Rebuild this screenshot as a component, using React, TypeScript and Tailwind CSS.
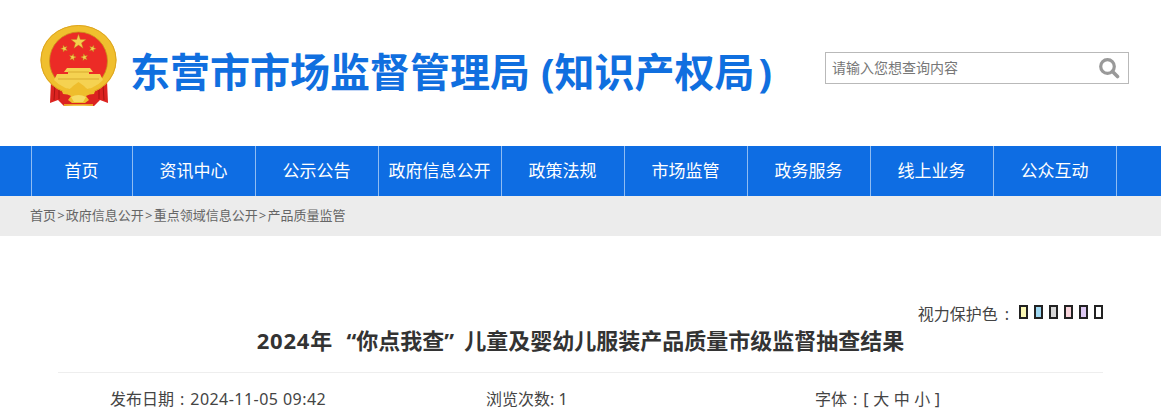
const cjk = "font-['Noto_Sans','Noto_Sans_CJK_SC',sans-serif]";

const navItems = ["资讯中心", "公示公告", "政府信息公开", "政策法规", "市场监管", "政务服务", "线上业务", "公众互动"];

const swatches = ["bg-[#fbf8b4]", "bg-[#9fd8f2]", "bg-[#d6d6d6]", "bg-[#f9d5dc]", "bg-[#dcc8f2]", "bg-white"];

const crumbs = ["首页", "政府信息公开", "重点领域信息公开", "产品质量监管"];

function Star({ x, y, r, rot = 0 }: { x: number; y: number; r: number; rot?: number }) {
  const pts: string[] = [];
  for (let i = 0; i < 10; i++) {
    const rad = i % 2 === 0 ? r : r * 0.4;
    const a = (-90 + rot + i * 36) * (Math.PI / 180);
    pts.push(`${(x + rad * Math.cos(a)).toFixed(2)},${(y + rad * Math.sin(a)).toFixed(2)}`);
  }
  return <polygon points={pts.join(" ")} fill="#f4cf4e" stroke="#b98a1a" strokeWidth="0.4" />;
}

function Emblem() {
  return (
    <svg width="78" height="82" viewBox="0 0 78 82" className="shrink-0">
      {/* ribbons */}
      <path d="M11 56 L10 78 L18 75 L24 81 L34 80 L44 80 L54 81 L60 75 L68 78 L67 56 Z" fill="#dc2320" />
      <path d="M15 60 L14 75 M19 62 L19 74 M63 60 L64 75 M59 62 L59 74" stroke="#a91512" strokeWidth="1" />
      {/* ring */}
      <ellipse cx="38.5" cy="35" rx="38" ry="35" fill="#f0bf2e" />
      <ellipse cx="38.5" cy="35" rx="37.5" ry="34.5" fill="none" stroke="#dda521" strokeWidth="1" />
      <circle cx="38.5" cy="36" r="29" fill="#ec2b26" stroke="#c9931b" strokeWidth="0.8" />
      <Star x={38.5} y={17} r={7.8} />
      <Star x={24.3} y={23.6} r={3.6} rot={-20} />
      <Star x={52.5} y={23.6} r={3.6} rot={20} />
      <Star x={32.6} y={32.3} r={3.6} rot={12} />
      <Star x={44.4} y={32.3} r={3.6} rot={-12} />
      {/* gate */}
      <path d="M27 43 H50 L53 47 H49 V49 H60 L63 55 Q54 65 38.5 65 Q23 65 14 55 L17 49 H28 V47 H24 Z" fill="#f5d251" />
      <path d="M28 47 H49 M18 54 H59" stroke="#cf9e22" strokeWidth="0.7" />
      {/* knot */}
      <path d="M22 66 Q29 66 33 61 L38.5 57 L44 61 Q48 66 55 66 L54 69 Q49 69 46 71 L49 75 L45 78 H32 L28 75 L31 71 Q28 69 23 69 Z" fill="#efbd2c" />
      <path d="M31 72 Q38.5 68 46 72 L43 77 H34 Z" fill="#f7dc66" />
      <path d="M24 80 H53" stroke="#efbd2c" strokeWidth="1.6" />
    </svg>
  );
}

export default function App() {
  return (
    <div className={`w-[1161px] h-[420px] overflow-hidden bg-white ${cjk}`}>
      <header className="h-[146px] flex items-start pl-10 pr-8 pt-[25px]">
        <Emblem />
        <h1 className="ml-[12px] mt-[27px] text-[40px] leading-[40px] font-bold text-[#106fdf] whitespace-nowrap">
          东营市市场监督管理局<span className="ml-[11px]">(</span>知识产权局<span className="ml-[4px]">)</span>
        </h1>
        <div className="ml-auto mt-[27px] w-[304px] h-8 border border-[#b9b9b9] flex items-center pl-[6px] pr-[8px]">
          <span className="text-[14px] mt-[-2px] text-[#777]">请输入您想查询内容</span>
          <svg width="22" height="22" viewBox="0 0 22 22" fill="none" className="ml-auto">
            <circle cx="9.5" cy="9.5" r="6.8" stroke="#999" strokeWidth="3.2" />
            <path d="M14.5 14.5 L19.5 19.5" stroke="#999" strokeWidth="3.6" strokeLinecap="round" />
          </svg>
        </div>
      </header>

      <nav className="h-[50px] bg-[#0e6de3] pl-[31px] flex">
        <a className="w-[101px] border-l border-[#8fbcf2] pr-[1px] flex items-center justify-center text-[17px] text-white">首页</a>
        {navItems.map((item) => (
          <a key={item} className="w-[123px] border-l border-[#8fbcf2] pr-[1px] flex items-center justify-center text-[17px] text-white whitespace-nowrap">
            {item}
          </a>
        ))}
        <span className="w-0 border-l border-[#8fbcf2]" />
      </nav>

      <div className="h-10 bg-[#ececec] pl-[30px] flex items-center text-[13px] text-[#666]">
        {crumbs.map((c, i) => (
          <span key={c}>
            {i > 0 && <span className="mx-[1.2px]">&gt;</span>}
            {c}
          </span>
        ))}
      </div>

      <div className="flex justify-end items-center pr-[58px] pt-[67px] h-[88px] text-base text-[#444]">
        <span>视力保护色</span>
        <span className="ml-[7px] mr-[10px]">:</span>
        <div className="flex gap-[6px] mt-[-3px]">
          {swatches.map((c) => (
            <span key={c} className={`w-[9px] h-[14px] border-2 border-[#222] ${c}`} />
          ))}
        </div>
      </div>

      <h2 className="text-center text-[22px] leading-[32px] font-bold text-[#333] whitespace-nowrap">
        <span className="tracking-[0.8px]">2024</span>年
        <span className="inline-block w-[24px] text-right">“</span>你点我查
        <span className="inline-block w-[20px] text-left">”</span>儿童及婴幼儿服装产品质量市级监督抽查结果
      </h2>

      <div className="mx-[58px] mt-[16px] border-t border-[#eeeeee] pt-[14px] flex text-base leading-6 text-[#444] whitespace-nowrap">
        <span className="ml-[52px] w-[376px]">
          发布日期<span className="mx-[6px]">:</span>
          <span className="tracking-[0.45px]">2024-11-05 09:42</span>
        </span>
        <span className="w-[329px]">浏览次数: 1</span>
        <span>
          字体<span className="mx-[6px]">:</span>
          <span className="tracking-[0.2px]">[ 大 中 小 ]</span>
        </span>
      </div>
    </div>
  );
}
